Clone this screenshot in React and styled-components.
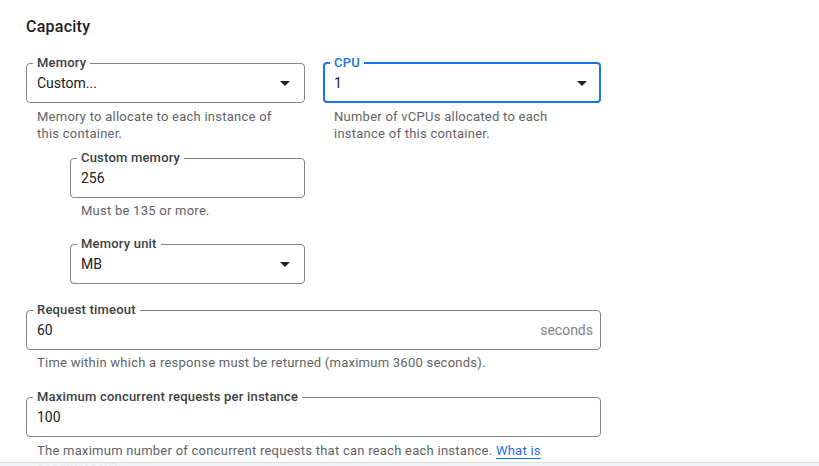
import React from "react";
import styled, { createGlobalStyle } from "styled-components";

const GlobalStyle = createGlobalStyle`
  html, body {
    margin: 0;
    background: #fff;
    overflow: hidden;
  }
  body {
    font-family: Roboto, "Liberation Sans", Arial, sans-serif;
    color: #202124;
  }
`;

const Page = styled.div`
  width: 575px;
  padding: 15px 26px 40px;
`;

const Title = styled.h2`
  margin: 0;
  font-size: 16px;
  line-height: 24px;
  font-weight: 500;
  letter-spacing: 0.25px;
  color: #202124;
`;

const Columns = styled.div`
  display: grid;
  grid-template-columns: 279px 278px;
  column-gap: 18px;
  margin-top: 17px;
`;

const Group = styled.div`
  margin-top: ${(p) => p.$gap || 0}px;
`;

const SubGroup = styled.div`
  width: 235px;
  margin-top: 9px;
  padding-left: 44px;
`;

const Field = styled.fieldset`
  margin: 0;
  min-width: 0;
  padding: ${(p) => (p.$focused ? "0 12px 6px 5px" : "0 14px 7px 6px")};
  border: ${(p) => (p.$focused ? "2px solid #1a73e8" : "1px solid #80868b")};
  border-radius: 4px;
`;

const Legend = styled.legend`
  padding: 0 4px;
  font-size: 13px;
  line-height: 14px;
  font-weight: 500;
  letter-spacing: 0.2px;
  color: ${(p) => (p.$focused ? "#1a73e8" : "#3c4043")};
`;

const Control = styled.div`
  display: flex;
  align-items: center;
  height: 24px;
  margin-top: 1px;
  padding-left: 4px;
  font-size: 14px;
  color: #202124;
`;

const Value = styled.span`
  flex: 1;
`;

const Arrow = styled.span`
  width: 0;
  height: 0;
  border-left: 5px solid transparent;
  border-right: 5px solid transparent;
  border-top: 5px solid #202124;
`;

const Suffix = styled.span`
  margin-right: -7px;
  color: #80868b;
`;

const Hint = styled.div`
  margin-top: ${(p) => p.$gap || 4}px;
  padding: 0 16px 0 11px;
  font-size: 13px;
  line-height: 17px;
  letter-spacing: 0.25px;
  color: #5f6368;
`;

const Link = styled.a`
  color: #1a73e8;
  text-decoration: underline;
  text-underline-offset: 3px;
  cursor: pointer;
`;

const BottomBar = styled.div`
  position: fixed;
  left: 0;
  right: 0;
  bottom: 0;
  height: 3px;
  border-top: 1px solid #dadce0;
  background: rgba(241, 243, 244, 0.92);
`;

function TextField({ label, value, select, suffix, focused }) {
  return (
    <Field $focused={focused}>
      <Legend $focused={focused}>{label}</Legend>
      <Control>
        <Value>{value}</Value>
        {select && <Arrow />}
        {suffix && <Suffix>{suffix}</Suffix>}
      </Control>
    </Field>
  );
}

export default function App() {
  return (
    <>
      <GlobalStyle />
      <Page>
        <Title>Capacity</Title>
        <Columns>
          <div>
            <TextField label="Memory" value="Custom..." select />
            <Hint $gap={5}>Memory to allocate to each instance of this container.</Hint>
          </div>
          <div>
            <TextField label="CPU" value="1" select focused />
            <Hint $gap={5}>Number of vCPUs allocated to each instance of this container.</Hint>
          </div>
        </Columns>
        <SubGroup>
          <TextField label="Custom memory" value="256" />
          <Hint>Must be 135 or more.</Hint>
          <Group $gap={18}>
            <TextField label="Memory unit" value="MB" select />
          </Group>
        </SubGroup>
        <Group $gap={19}>
          <TextField label="Request timeout" value="60" suffix="seconds" />
          <Hint>Time within which a response must be returned (maximum 3600 seconds).</Hint>
        </Group>
        <Group $gap={19}>
          <TextField label="Maximum concurrent requests per instance" value="100" />
          <Hint $gap={5}>
            The maximum number of concurrent requests that can reach each instance.{" "}
            <Link>What is concurrency?</Link>
          </Hint>
        </Group>
      </Page>
      <BottomBar />
    </>
  );
}
